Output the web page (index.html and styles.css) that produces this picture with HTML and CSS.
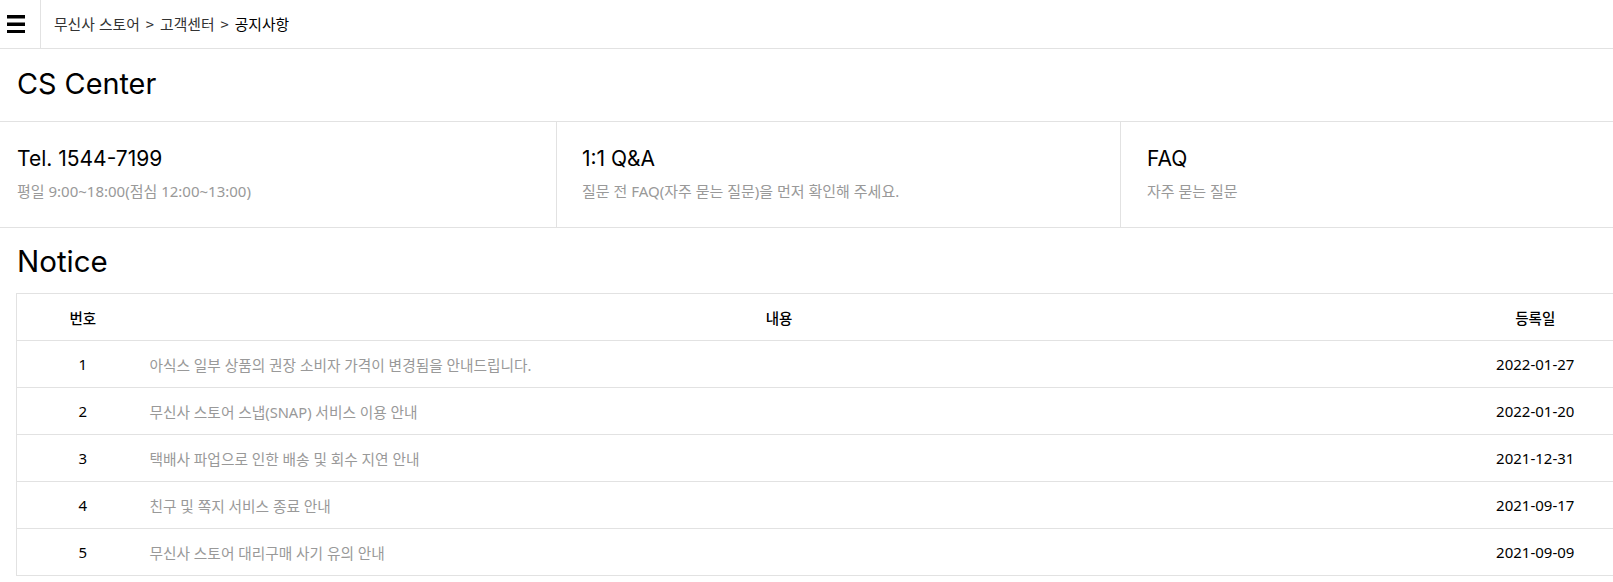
FILE: index.html
```html
<!DOCTYPE html>
<html lang="ko">
<head>
<meta charset="utf-8">
<title>CS Center</title>
<link rel="stylesheet" href="styles.css">
</head>
<body>
<header class="topbar">
  <button class="menu-btn" aria-label="menu">
    <svg width="18" height="18" viewBox="0 0 18 18"><rect x="0" y="0" width="18" height="3.5" fill="#000"/><rect x="0" y="7.5" width="18" height="3.5" fill="#000"/><rect x="0" y="15" width="18" height="3.5" fill="#000"/></svg>
  </button>
  <nav class="breadcrumb"><span>무신사 스토어</span><span class="sep">&gt;</span><span>고객센터</span><span class="sep">&gt;</span><span class="current">공지사항</span></nav>
</header>

<section class="page-title">
  <h1>CS Center</h1>
</section>

<section class="cards">
  <div class="card card-1">
    <h2>Tel. 1544-7199</h2>
    <p>평일 9:00~18:00(점심 12:00~13:00)</p>
  </div>
  <div class="card card-2">
    <h2>1:1 Q&amp;A</h2>
    <p>질문 전 FAQ(자주 묻는 질문)을 먼저 확인해 주세요.</p>
  </div>
  <div class="card card-3">
    <h2>FAQ</h2>
    <p>자주 묻는 질문</p>
  </div>
</section>

<section class="notice">
  <h2 class="notice-title">Notice</h2>
  <table class="notice-table">
    <colgroup><col class="c-no"><col class="c-body"><col class="c-date"></colgroup>
    <thead>
      <tr><th>번호</th><th>내용</th><th>등록일</th></tr>
    </thead>
    <tbody>
      <tr><td class="no">1</td><td class="subject">아식스 일부 상품의 권장 소비자 가격이 변경됨을 안내드립니다.</td><td class="date">2022-01-27</td></tr>
      <tr><td class="no">2</td><td class="subject">무신사 스토어 스냅(SNAP) 서비스 이용 안내</td><td class="date">2022-01-20</td></tr>
      <tr><td class="no">3</td><td class="subject">택배사 파업으로 인한 배송 및 회수 지연 안내</td><td class="date">2021-12-31</td></tr>
      <tr><td class="no">4</td><td class="subject">친구 및 쪽지 서비스 종료 안내</td><td class="date">2021-09-17</td></tr>
      <tr><td class="no">5</td><td class="subject">무신사 스토어 대리구매 사기 유의 안내</td><td class="date">2021-09-09</td></tr>
    </tbody>
  </table>
</section>
</body>
</html>
```

FILE: styles.css
```css
* { box-sizing: border-box; }
html, body { margin: 0; padding: 0; }
body {
  background: #fff;
  color: #000;
  font-family: "Noto Sans", "Noto Sans CJK KR", sans-serif;
  overflow: hidden;
}
.topbar {
  display: flex;
  align-items: stretch;
  height: 49px;
  border-bottom: 1px solid #e2e2e2;
}
.menu-btn {
  width: 41px;
  border: 0;
  border-right: 1px solid #e2e2e2;
  background: #fff;
  padding: 0 0 0 7px;
  display: flex;
  align-items: center;
}
.breadcrumb {
  display: flex;
  align-items: center;
  padding: 0 0 1px 13px;
  font-family: "Noto Sans CJK KR", sans-serif;
  font-size: 14.8px;
  color: #333;
  white-space: pre;
}
.breadcrumb .sep { margin: 0 6px; }
.breadcrumb .current { color: #000; }

.page-title {
  height: 73px;
  border-bottom: 1px solid #e2e2e2;
  display: flex;
  align-items: center;
  padding: 0 0 3px 17px;
}
.page-title h1, .notice-title {
  margin: 0;
  font-family: "Inter", "Liberation Sans", sans-serif;
  font-weight: 400;
  letter-spacing: 0;
}
.page-title h1 { font-size: 28.8px; }
.notice-title { font-size: 29.5px; }

.cards {
  display: grid;
  grid-template-columns: 556px 564px 1fr;
  height: 106px;
  border-bottom: 1px solid #e2e2e2;
}
.card {
  padding-top: 23px;
}
.card + .card { border-left: 1px solid #e2e2e2; }
.card-1 { padding-left: 17px; }
.card-2 { padding-left: 25px; }
.card-3 { padding-left: 26px; }
.card h2 {
  margin: 0;
  font-family: "Inter", "Liberation Sans", sans-serif;
  font-weight: 400;
  font-size: 21px;
  line-height: 28px;
}
.card p {
  margin: 8px 0 0;
  font-size: 15px;
  line-height: 20px;
  color: #999;
}

.notice { padding-left: 16px; }
.notice-title {
  height: 65px;
  display: flex;
  align-items: center;
  padding: 0 0 0 1px;
}
.notice-table {
  width: 1646px;
  border-collapse: collapse;
  border: 1px solid #e2e2e2;
  font-size: 15px;
}
.c-no { width: 132px; }
.c-date { width: 252px; }
.notice-table th {
  height: 47px;
  font-family: "Noto Sans CJK KR", sans-serif;
  font-weight: 500;
  font-size: 14.5px;
  border-bottom: 1px solid #e2e2e2;
  color: #000;
}
.notice-table td {
  height: 47px;
  border-bottom: 1px solid #e2e2e2;
  padding: 0;
}
.notice-table td.no, .notice-table td.date { text-align: center; color: #000; }
.notice-table td.subject { color: #999; padding-left: 1px; font-size: 14.7px; }
```
